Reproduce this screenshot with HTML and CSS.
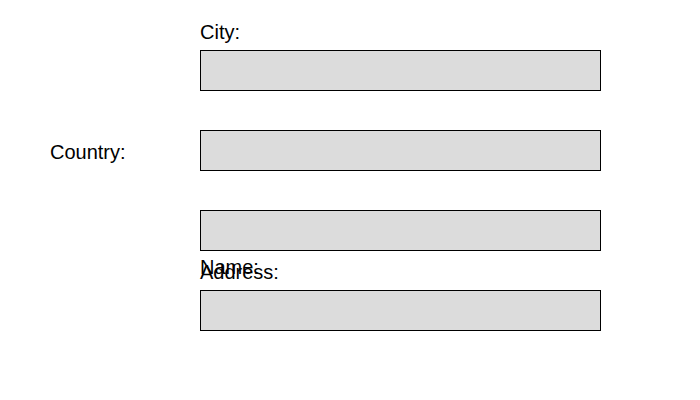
FILE: index.html
```html
<!DOCTYPE html>
<html>
<head>
<meta charset="utf-8">
<link rel="stylesheet" href="styles.css">
</head>
<body>
<form class="form">
  <div class="field field-city">
    <label class="label label-top" for="city">City:</label>
    <input class="input" id="city" type="text">
  </div>
  <div class="field field-country">
    <label class="label label-side" for="country">Country:</label>
    <input class="input" id="country" type="text">
  </div>
  <div class="field field-name">
    <input class="input" id="name" type="text">
    <label class="label label-top" for="name">Name:</label>
  </div>
  <div class="field field-address">
    <label class="label label-top" for="address">Address:</label>
    <input class="input" id="address" type="text">
  </div>
</form>
</body>
</html>
```
FILE: styles.css
```css
html, body {
  margin: 0;
  padding: 0;
  background: #fff;
}
body {
  font-family: "Liberation Sans", Arial, sans-serif;
  font-size: 20px;
  color: #000;
}
.form {
  padding: 21px 0 0 50px;
  margin: 0;
}
.field {
  display: grid;
  grid-template-columns: 150px 401px;
}
.label {
  line-height: 23px;
  height: 23px;
}
.label-top {
  grid-column: 2;
}
.label-side {
  grid-column: 1;
  align-self: center;
  padding-top: 4px;
}
.input {
  grid-column: 2;
  box-sizing: border-box;
  width: 401px;
  height: 41px;
  margin: 0;
  padding: 0;
  border: 1px solid #000;
  background: #dcdcdc;
  font: inherit;
}
.field-city {
  row-gap: 6px;
}
.field-country {
  margin-top: 39px;
}
.field-name {
  margin-top: 39px;
  row-gap: 5px;
}
.field-address {
  margin-top: -18px;
  row-gap: 6px;
}
```
